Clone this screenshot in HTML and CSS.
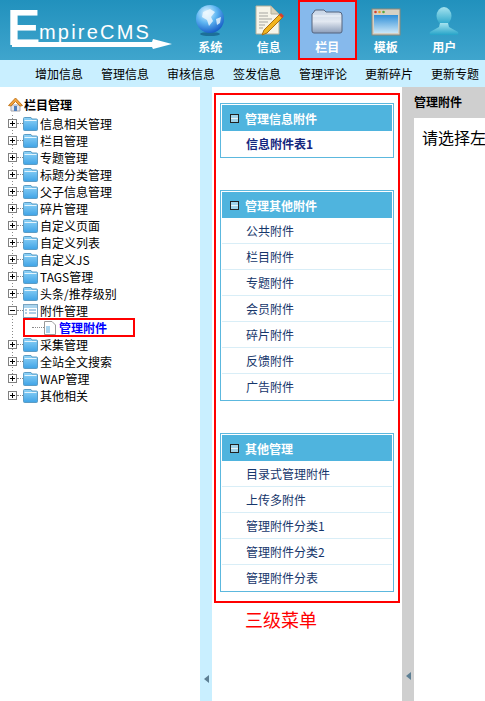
FILE: index.html
```html
<!DOCTYPE html>
<html lang="zh-CN">
<head>
  <meta charset="UTF-8" />
  <title>EmpireCMS 栏目管理</title>
  <link rel="stylesheet" href="styles.css">
</head>
<body>

  <svg class="defs" width="0" height="0">
    <defs>
      <linearGradient id="folderFill" x1="0" y1="0" x2="0" y2="1">
        <stop offset="0" stop-color="#8fd3f7" />
        <stop offset="1" stop-color="#3fa3e6" />
      </linearGradient>
      <symbol id="folder" viewBox="0 0 15 14">
        <path d="M.5 12.5V1.5Q.5 .5 1.5 .5H8L9 2H13.5Q14.5 2 14.5 3V12.5Q14.5 13.5 13.5 13.5H1.5Q.5 13.5 .5 12.5Z" fill="url(#folderFill)" stroke="#5d9cc4" />
        <path d="M1.5 3.5H13.5" stroke="#e4f5fd" />
      </symbol>
      <symbol id="plus" viewBox="0 0 9 9">
        <rect x=".5" y=".5" width="8" height="8" fill="#fff" stroke="#808080" />
        <path d="M2 4.5H7M4.5 2V7" stroke="#000" />
      </symbol>
    </defs>
  </svg>

  <header class="top">
    <div class="logo">
      <span class="logo-e">E</span><span class="logo-rest">mpireCMS</span>
      <svg class="logo-arrow" width="160" height="10" viewBox="0 0 160 10">
        <path d="M0 3H140L141 0L160 5L141 10L140 8H0Z" fill="#fff" />
      </svg>
    </div>
    <nav class="mainnav">
      <a class="mainnav-item">
        <svg width="30" height="32" viewBox="0 0 30 32">
          <defs>
            <radialGradient id="globe" cx=".38" cy=".28" r=".8">
              <stop offset="0" stop-color="#e2f6ff" />
              <stop offset=".45" stop-color="#5fb6f2" />
              <stop offset="1" stop-color="#0c4fc0" />
            </radialGradient>
          </defs>
          <ellipse cx="15" cy="29" rx="10" ry="2" fill="#1c6f98" />
          <circle cx="15" cy="14" r="14" fill="url(#globe)" />
          <path d="M8 7L15 4L20 7L16 12L18 16L14 21L12 15L7 12ZM21 14L26 12L25 18L22 20Z" fill="#f0f9fe" opacity=".8" />
        </svg>
        <span>系统</span>
      </a>
      <a class="mainnav-item">
        <svg width="30" height="32" viewBox="0 0 30 32">
          <path d="M2 1H17L25 9V29H2Z" fill="#f6f4e8" stroke="#b5b09b" />
          <path d="M17 1V9H25Z" fill="#d8d3bd" stroke="#b5b09b" />
          <path d="M5 8H14M5 11H14M5 14H18M5 17H14M5 20H11M5 23H9" stroke="#a5a5a0" />
          <path d="M26 9L29 12L13 28L8 30L10 25Z" fill="#f2b41e" stroke="#a86f10" />
          <path d="M25 10L28 13L30 11L27 8Z" fill="#d8402c" />
        </svg>
        <span>信息</span>
      </a>
      <a class="mainnav-item is-current">
        <svg width="32" height="32" viewBox="0 0 32 32">
          <defs>
            <linearGradient id="bigFolder" x1="0" y1="0" x2="0" y2="1">
              <stop offset="0" stop-color="#c6d4e6" />
              <stop offset=".5" stop-color="#e2e8f1" />
              <stop offset="1" stop-color="#8c9db9" />
            </linearGradient>
          </defs>
          <path d="M3 7Q3 5 5 5H13L15 7H28Q31 7 31 10V26Q31 28 29 28H3Q1 28 1 26V9Z" fill="url(#bigFolder)" stroke="#54647f" />
          <path d="M2 11H30" stroke="#f0f4f9" />
        </svg>
        <span>栏目</span>
      </a>
      <a class="mainnav-item">
        <svg width="30" height="32" viewBox="0 0 30 32">
          <defs>
            <linearGradient id="winFill" x1="0" y1="0" x2="0" y2="1">
              <stop offset="0" stop-color="#2f8fd8" />
              <stop offset="1" stop-color="#cbe7f8" />
            </linearGradient>
          </defs>
          <rect x="1" y="4" width="28" height="26" fill="#d6d1c4" stroke="#8d8778" />
          <rect x="3" y="10" width="24" height="18" fill="url(#winFill)" />
          <circle cx="4.5" cy="7" r="1.3" fill="#d8402c" />
          <circle cx="8.5" cy="7" r="1.3" fill="#e8a520" />
          <circle cx="12.5" cy="7" r="1.3" fill="#55a840" />
        </svg>
        <span>模板</span>
      </a>
      <a class="mainnav-item">
        <svg width="30" height="32" viewBox="0 0 30 32">
          <defs>
            <linearGradient id="userFill" x1="0" y1="0" x2="0" y2="1">
              <stop offset="0" stop-color="#a5e3ef" />
              <stop offset="1" stop-color="#25a3c8" />
            </linearGradient>
          </defs>
          <ellipse cx="15" cy="11" rx="7.5" ry="9" fill="url(#userFill)" />
          <path d="M11 18H19L20 22L29 27Q30 30 28 30H2Q0 30 1 27L10 22Z" fill="url(#userFill)" />
        </svg>
        <span>用户</span>
      </a>
    </nav>
  </header>

  <nav class="subnav">
    <a>增加信息</a>
    <a>管理信息</a>
    <a>审核信息</a>
    <a>签发信息</a>
    <a>管理评论</a>
    <a>更新碎片</a>
    <a>更新专题</a>
  </nav>

  <main class="layout">
    <aside class="tree">
      <div class="tree-title">
        <svg width="15" height="15" viewBox="0 0 15 15">
          <path d="M3 8H12V14H3Z" fill="#e6e6ea" stroke="#a5a5ad" />
          <path d="M.5 8.5L7.5 1L14.5 8.5L12 9L7.5 4.5L3 9Z" fill="#f2a23c" stroke="#c57a22" />
          <rect x="6" y="9" width="3" height="5" fill="#4e7fbd" />
        </svg>
        <b>栏目管理</b>
      </div>
      <ul class="tree-list">
        <li><svg class="toggle"><use href="#plus" /></svg><i class="dots"></i><svg class="ficon"><use href="#folder" /></svg>信息相关管理</li>
        <li><svg class="toggle"><use href="#plus" /></svg><i class="dots"></i><svg class="ficon"><use href="#folder" /></svg>栏目管理</li>
        <li><svg class="toggle"><use href="#plus" /></svg><i class="dots"></i><svg class="ficon"><use href="#folder" /></svg>专题管理</li>
        <li><svg class="toggle"><use href="#plus" /></svg><i class="dots"></i><svg class="ficon"><use href="#folder" /></svg>标题分类管理</li>
        <li><svg class="toggle"><use href="#plus" /></svg><i class="dots"></i><svg class="ficon"><use href="#folder" /></svg>父子信息管理</li>
        <li><svg class="toggle"><use href="#plus" /></svg><i class="dots"></i><svg class="ficon"><use href="#folder" /></svg>碎片管理</li>
        <li><svg class="toggle"><use href="#plus" /></svg><i class="dots"></i><svg class="ficon"><use href="#folder" /></svg>自定义页面</li>
        <li><svg class="toggle"><use href="#plus" /></svg><i class="dots"></i><svg class="ficon"><use href="#folder" /></svg>自定义列表</li>
        <li><svg class="toggle"><use href="#plus" /></svg><i class="dots"></i><svg class="ficon"><use href="#folder" /></svg>自定义JS</li>
        <li><svg class="toggle"><use href="#plus" /></svg><i class="dots"></i><svg class="ficon"><use href="#folder" /></svg>TAGS管理</li>
        <li><svg class="toggle"><use href="#plus" /></svg><i class="dots"></i><svg class="ficon"><use href="#folder" /></svg>头条/推荐级别</li>
        <li>
          <svg class="toggle" viewBox="0 0 9 9"><rect x=".5" y=".5" width="8" height="8" fill="#fff" stroke="#808080" /><path d="M2 4.5H7" stroke="#000" /></svg><i class="dots"></i>
          <svg class="ficon" viewBox="0 0 15 14">
            <rect x=".5" y=".5" width="14" height="13" fill="#fff" stroke="#7ba4c0" />
            <rect x="1" y="1" width="13" height="3" fill="#a9d4ee" />
            <path d="M2 6H4M2 9H4M6 6H13M6 9H13" stroke="#5d9ccb" />
          </svg>附件管理
        </li>
        <li class="tree-child">
          <i class="dots dots-child"></i>
          <svg class="ficon page" viewBox="0 0 12 14">
            <path d="M.5 .5H8L11.5 4V13.5H.5Z" fill="#fff" stroke="#9a9a9a" />
            <rect x="2" y="5" width="4" height="7" fill="#a9d4ee" />
          </svg>
          <b>管理附件</b>
        </li>
        <li><svg class="toggle"><use href="#plus" /></svg><i class="dots"></i><svg class="ficon"><use href="#folder" /></svg>采集管理</li>
        <li><svg class="toggle"><use href="#plus" /></svg><i class="dots"></i><svg class="ficon"><use href="#folder" /></svg>全站全文搜索</li>
        <li><svg class="toggle"><use href="#plus" /></svg><i class="dots"></i><svg class="ficon"><use href="#folder" /></svg>WAP管理</li>
        <li><svg class="toggle"><use href="#plus" /></svg><i class="dots"></i><svg class="ficon"><use href="#folder" /></svg>其他相关</li>
      </ul>
    </aside>

    <div class="splitter splitter-blue"><i class="handle"></i></div>

    <section class="menu">
      <div class="menu-frame">
        <div class="panel">
          <h3><i class="collapse"></i>管理信息附件</h3>
          <a class="panel-link is-active">信息附件表1</a>
        </div>
        <div class="panel">
          <h3><i class="collapse"></i>管理其他附件</h3>
          <a class="panel-link">公共附件</a>
          <a class="panel-link">栏目附件</a>
          <a class="panel-link">专题附件</a>
          <a class="panel-link">会员附件</a>
          <a class="panel-link">碎片附件</a>
          <a class="panel-link">反馈附件</a>
          <a class="panel-link">广告附件</a>
        </div>
        <div class="panel">
          <h3><i class="collapse"></i>其他管理</h3>
          <a class="panel-link">目录式管理附件</a>
          <a class="panel-link">上传多附件</a>
          <a class="panel-link">管理附件分类1</a>
          <a class="panel-link">管理附件分类2</a>
          <a class="panel-link">管理附件分表</a>
        </div>
      </div>
      <p class="menu-note">三级菜单</p>
    </section>

    <div class="splitter splitter-grey"><i class="handle"></i></div>

    <section class="content">
      <div class="content-head">管理附件</div>
      <div class="content-body">请选择左</div>
    </section>
  </main>

</body>
</html>
```

FILE: styles.css
```css
* {
  box-sizing: border-box;
}

html,
body {
  margin: 0;
  height: 701px;
  overflow: hidden;
}

body {
  font-family: "Noto Sans CJK SC", "Liberation Sans", sans-serif;
  font-size: 12px;
  color: #000;
  background-color: #fff;
}

.defs {
  position: absolute;
}

.top {
  display: flex;
  height: 60px;
  background: linear-gradient(#2191bd, #3fa5cd);
}

.logo {
  position: relative;
  width: 181px;
  color: #fff;
  font-family: "Liberation Sans", sans-serif;
}

.logo-e {
  position: absolute;
  left: 7px;
  top: 0;
  font-size: 50px;
  line-height: 56px;
  font-weight: bold;
}

.logo-rest {
  position: absolute;
  left: 39px;
  top: 21px;
  font-size: 20px;
  line-height: 22px;
  letter-spacing: 2.2px;
}

.logo-arrow {
  position: absolute;
  left: 12px;
  top: 39px;
}

.mainnav {
  display: flex;
}

.mainnav-item {
  display: flex;
  flex-direction: column;
  align-items: center;
  width: 58.5px;
  padding-top: 5px;
  color: #fff;
  font-size: 12px;
  font-weight: bold;
  line-height: 16px;
}

.mainnav-item span {
  margin-top: 2px;
}

.is-current {
  background-color: #86b9ec;
  border: 2px solid #f00;
  padding-top: 3px;
}

.subnav {
  display: flex;
  gap: 18px;
  height: 27px;
  padding-left: 35px;
  align-items: center;
  background-color: #c9efff;
  white-space: nowrap;
}

.layout {
  display: grid;
  grid-template-columns: 200px 12px 190px 12px 71px;
  height: 614px;
}

.tree {
  padding: 9px 0 0 8px;
}

.tree-title {
  display: flex;
  align-items: center;
  gap: 1px;
  height: 17px;
}

.tree-list {
  list-style: none;
  margin: 2px 0 0;
  padding: 0;
  background: repeating-linear-gradient(#888 0 1px, transparent 1px 3px) 4px 0 / 1px 272px no-repeat;
}

.tree-list li {
  display: flex;
  align-items: center;
  height: 17px;
  line-height: 17px;
  white-space: nowrap;
}

.toggle {
  width: 9px;
  height: 9px;
  flex: none;
}

.dots {
  width: 6px;
  border-top: 1px dotted #888;
  flex: none;
}

.ficon {
  width: 15px;
  height: 14px;
  margin-right: 2px;
  flex: none;
}

.tree-list .tree-child {
  width: 112px;
  height: 19px;
  margin: -1px 0 -1px 15px;
  padding-left: 13px;
  border: 2px solid #f00;
}

.dots-child {
  width: 12px;
  margin-left: -6px;
}

.page {
  width: 12px;
  margin-right: 3px;
}

.tree-child b {
  color: #00f;
}

.splitter {
  display: flex;
  align-items: flex-end;
  justify-content: center;
}

.splitter-blue {
  padding-bottom: 18px;
  background-color: #c9efff;
}

.splitter-grey {
  padding-bottom: 21px;
  background-color: #cfcfcf;
}

.handle {
  width: 0;
  height: 0;
  border: 4px solid transparent;
  border-left-width: 0;
  border-right: 5px solid #5d7f94;
}

.menu {
  padding: 6px 2px 0;
}

.menu-frame {
  height: 510px;
  padding: 8px 4px 0;
  border: 2px solid #f00;
}

.panel {
  margin-bottom: 32px;
  padding: 1px 1px 0;
  border: 1px solid #5cb8de;
}

.panel h3 {
  display: flex;
  align-items: center;
  height: 26px;
  margin: 0;
  padding-left: 8px;
  color: #fff;
  font-size: 12px;
  font-weight: bold;
  background-color: #4fb4de;
  gap: 7px;
}

.collapse {
  width: 9px;
  height: 9px;
  margin-right: -1px;
  border: 1px solid #000;
  background: linear-gradient(#9fd3ea 0 3px, #e8f4fa 3px 4px, #9fd3ea 4px);
  outline: 1px solid #222;
  outline-offset: -1px;
}

.panel-link {
  display: block;
  height: 26px;
  padding-left: 24px;
  line-height: 25px;
  color: #16366b;
  border-bottom: 1px solid #d9eef7;
}

.panel-link:last-child {
  border-bottom: none;
}

.is-active {
  color: #14277f;
  font-weight: bold;
}

.menu-note {
  margin: 4px 0 0 31px;
  color: #f00;
  font-size: 18px;
  line-height: 24px;
}

.content {
  overflow: hidden;
}

.content-head {
  height: 31px;
  line-height: 30px;
  font-weight: bold;
  white-space: nowrap;
  background-color: #cfcfcf;
}

.content-body {
  padding: 8px 0 0 8px;
  font-size: 16px;
  line-height: 22px;
  white-space: nowrap;
}
```
